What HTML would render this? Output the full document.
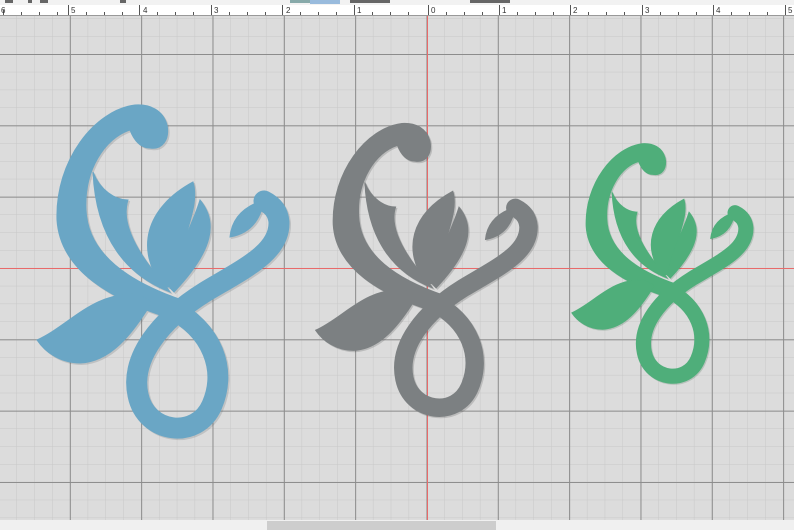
<!DOCTYPE html>
<html><head><style>
html,body{margin:0;padding:0;}
body{width:794px;height:530px;overflow:hidden;background:#dcdcdc;font-family:"Liberation Sans",sans-serif;position:relative;}
</style></head><body>
<svg width="794" height="530" xmlns="http://www.w3.org/2000/svg" style="position:absolute;left:0;top:0">
<defs>
<pattern id="minor" x="-1.5" y="0.5" width="17.83" height="17.83" patternUnits="userSpaceOnUse">
<path d="M0 0V17.83M0 0H17.83" stroke="#c8c8c8" stroke-width="1" fill="none"/>
</pattern>
<pattern id="major" x="-1.5" y="54" width="71.33" height="71.33" patternUnits="userSpaceOnUse">
<path d="M0.5 0V71.33M0 0.5H71.33" stroke="#8c8c8c" stroke-width="1" fill="none"/>
</pattern>
<g id="orn">
<path d="M150,148 C162,150 170,140 167,125 C163,110 150,104 135,105 C95,110 55,160 57,220 C60,270 110,300 175,320 L182,300 C130,282 88,255 86,210 C84,170 105,138 130,130 C134,141 141,148 150,148 Z"/>
<path d="M93,172 C100,190 115,200 128,200 C122,218 130,245 165,285 L170,292 C128,276 96,240 93,172 Z"/>
<path d="M163,287 C135,250 145,208 193,182 C200,205 185,230 172,287 Z"/>
<path d="M170,288 C176,250 190,232 200,200 C218,222 214,250 174,292 Z"/>
<path d="M230,237 C232,215 248,205 264,200 C260,224 247,234 230,237 Z"/>
<path d="M37,340 C70,325 92,292 138,294 L152,302 C132,335 110,362 80,363 C60,363 45,352 37,340 Z"/>
<path d="M170,308 C213,330 227,370 212,405 C197,440 146,434 138,395 C130,358 160,320 205,292 C245,268 280,252 279,222 C278,211 272,205 264,201" fill="none" stroke-width="21" stroke-linecap="round"/>
</g>
</defs>
<rect x="0" y="16" width="794" height="504" fill="#dcdcdc"/>
<rect x="0" y="16" width="794" height="504" fill="url(#minor)"/>
<rect x="0" y="16" width="794" height="504" fill="url(#major)"/>
<line x1="0" y1="268.5" x2="794" y2="268.5" stroke="#e86a6a" stroke-width="1"/>
<line x1="427.5" y1="16" x2="427.5" y2="520" stroke="#e86a6a" stroke-width="1"/>
<g fill="#4f5a60" opacity="0.2" transform="translate(1.5,1.5)" stroke="#4f5a60"><use href="#orn"/></g>
<g fill="#6aa6c5" stroke="#6aa6c5"><use href="#orn"/></g>
<g transform="translate(283,31) scale(0.88)">
<g fill="#3a3d3e" stroke="#3a3d3e" opacity="0.2" transform="translate(1.5,1.5)"><use href="#orn"/></g>
<g fill="#7c8082" stroke="#7c8082"><use href="#orn"/></g>
</g>
<g transform="translate(545,68) scale(0.72)">
<g fill="#2c5e40" stroke="#2c5e40" opacity="0.2" transform="translate(1.5,1.5)"><use href="#orn"/></g>
<g fill="#4fae7a" stroke="#4fae7a"><use href="#orn"/></g>
</g>
<rect x="0" y="0" width="794" height="5" fill="#f2f2f2"/>
<g fill="#666"><rect x="5" y="0" width="8" height="3"/><rect x="28" y="0" width="4" height="3"/><rect x="40" y="0" width="8" height="3"/><rect x="120" y="0" width="6" height="3"/><rect x="290" y="0" width="40" height="3" fill="#8aa"/><rect x="310" y="0" width="30" height="4" fill="#9bd"/><rect x="350" y="0" width="40" height="3"/><rect x="470" y="0" width="40" height="3"/></g>
<rect x="0" y="5" width="794" height="11" fill="#ffffff"/>
<line x1="0" y1="15.5" x2="794" y2="15.5" stroke="#999"/>
<g stroke="#555" stroke-width="1">
<path d="M3.5 10V15M21.5 12V15M39.5 12V15M57.5 12V15M68.5 5V15M86.5 12V15M104.5 12V15M122.5 12V15M139.5 5V15M157.5 12V15M175.5 12V15M193.5 12V15M211.5 5V15M229.5 12V15M247.5 12V15M265.5 12V15M282.5 5V15M300.5 12V15M318.5 12V15M336.5 12V15M354.5 5V15M372.5 12V15M390.5 12V15M408.5 12V15M428.5 5V15M446.5 12V15M464.5 12V15M482.5 12V15M499.5 5V15M517.5 12V15M535.5 12V15M553.5 12V15M570.5 5V15M588.5 12V15M606.5 12V15M624.5 12V15M642.5 5V15M660.5 12V15M678.5 12V15M696.5 12V15M713.5 5V15M731.5 12V15M749.5 12V15M767.5 12V15M785.5 5V15"/>
</g>
<g font-size="8" fill="#333">
<text x="1" y="13">6</text><text x="71" y="13">5</text><text x="143" y="13">4</text><text x="214" y="13">3</text><text x="286" y="13">2</text><text x="357" y="13">1</text><text x="431" y="13">0</text><text x="502" y="13">1</text><text x="573" y="13">2</text><text x="645" y="13">3</text><text x="716" y="13">4</text><text x="788" y="13">5</text>
</g>
<rect x="0" y="520" width="794" height="10" fill="#f0f0f0"/>
<rect x="267" y="521" width="229" height="9" fill="#cdcdcd"/>
</svg>
</body></html>
